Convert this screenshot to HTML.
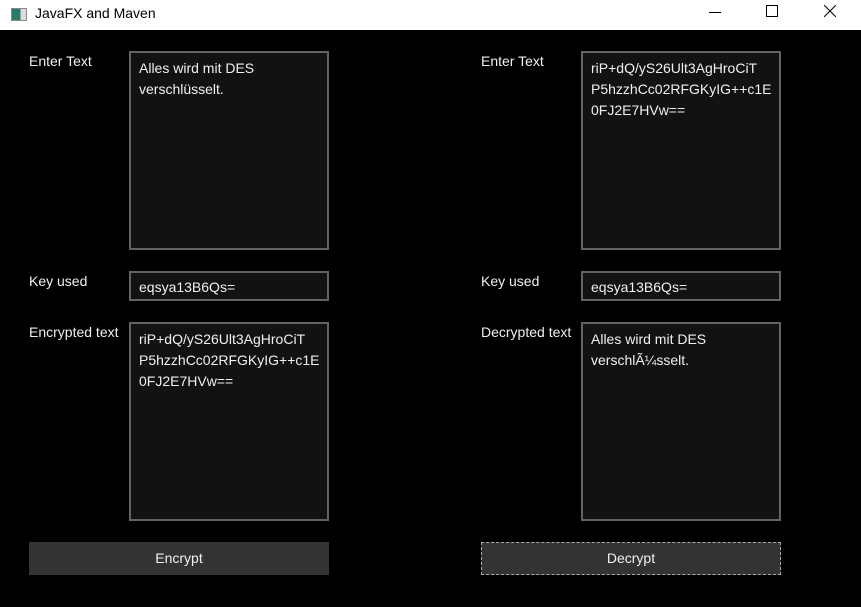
<!DOCTYPE html><html><head><style>
body{margin:0;width:861px;height:607px;background:#000;overflow:hidden;font-family:"Liberation Sans",sans-serif;position:relative}
.t{position:absolute;left:0;top:0;width:861px;height:30px;background:#fff;color:#000;font-size:14px}
.a{position:absolute;box-sizing:border-box;border:2px solid #636363;background:#121212;color:#f0f0f0;font-size:14px;line-height:21px;padding:5px 8px;width:200px;white-space:nowrap;overflow:hidden}
.l{position:absolute;color:#f0f0f0;font-size:14px}
.b{position:absolute;width:300px;height:33px;background:#333;color:#f0f0f0;font-size:14px;text-align:center;line-height:33px;box-sizing:border-box}
</style></head><body>
<div class="t">
<div style="position:absolute;left:11px;top:8px;width:14px;height:11px;border:1px solid #888;background:linear-gradient(90deg,#2a7a6a 60%,#ddd 60%)"></div>
<div style="position:absolute;left:35px;top:5px">JavaFX and Maven</div>
<div style="position:absolute;left:709px;top:12px;width:12px;height:1px;background:#000"></div>
<div style="position:absolute;left:766px;top:5px;width:10px;height:10px;border:1px solid #000"></div>
<svg style="position:absolute;left:824px;top:5px" width="12" height="12"><path d="M0 0L12 12M12 0L0 12" stroke="#000" stroke-width="1"/></svg>
</div>
<div class="l" style="left:29px;top:53px">Enter Text</div>
<div class="a" style="left:129px;top:51px;height:199px">Alles wird mit DES<br>verschlüsselt.</div>
<div class="l" style="left:29px;top:273px">Key used</div>
<div class="a" style="left:129px;top:271px;height:30px;padding-top:4px">eqsya13B6Qs=</div>
<div class="l" style="left:29px;top:324px">Encrypted text</div>
<div class="a" style="left:129px;top:322px;height:199px">riP+dQ/yS26Ult3AgHroCiT<br>P5hzzhCc02RFGKyIG++c1E<br>0FJ2E7HVw==</div>
<div class="b" style="left:29px;top:542px">Encrypt</div>

<div class="l" style="left:481px;top:53px">Enter Text</div>
<div class="a" style="left:581px;top:51px;height:199px">riP+dQ/yS26Ult3AgHroCiT<br>P5hzzhCc02RFGKyIG++c1E<br>0FJ2E7HVw==</div>
<div class="l" style="left:481px;top:273px">Key used</div>
<div class="a" style="left:581px;top:271px;height:30px;padding-top:4px">eqsya13B6Qs=</div>
<div class="l" style="left:481px;top:324px">Decrypted text</div>
<div class="a" style="left:581px;top:322px;height:199px">Alles wird mit DES<br>verschlÃ¼sselt.</div>
<div class="b" style="left:481px;top:542px;border:1px dashed #aaa;line-height:31px">Decrypt</div>
</body></html>
